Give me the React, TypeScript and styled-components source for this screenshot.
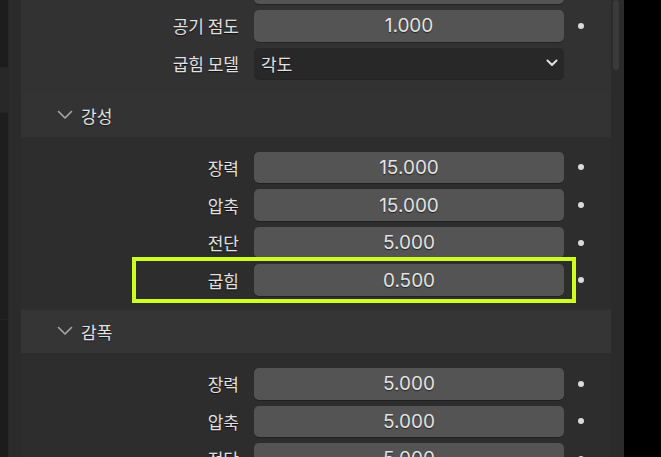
import React from "react";
import styled, { createGlobalStyle } from "styled-components";

const GlobalStyle = createGlobalStyle`
  html, body { margin: 0; padding: 0; background: #000; }
  body { font-family: Inter, "Noto Sans CJK KR", "Noto Sans", sans-serif; }
  * { box-sizing: border-box; }
`;

const Screen = styled.div`
  width: 661px;
  height: 457px;
  display: flex;
  overflow: hidden;
  background: #000;
`;

const SideStrip = styled.div`
  width: 9px;
  display: flex;
  flex-direction: column;
  border-right: 1px solid #262626;
`;

const StripSeg = styled.div<{ $h: number; $tone: string }>`
  height: ${(p) => p.$h}px;
  flex-shrink: 0;
  background: ${(p) => p.$tone};
  border-bottom: 1px solid #242424;
`;

const StripFill = styled.div`
  flex: 1;
  background: #1c1c1c;
`;

const Editor = styled.div`
  width: 615px;
  display: flex;
  align-items: flex-start;
  background: #2b2b2b;
  padding-left: 12px;
`;

const Content = styled.div`
  width: 590px;
  display: flex;
  flex-direction: column;
  & > * {
    flex-shrink: 0;
  }
`;

const ParentBody = styled.div`
  background: #323232;
  padding-bottom: 14.8px;
`;

const Rows = styled.div<{ $shift?: number }>`
  display: flex;
  flex-direction: column;
  gap: 6px;
  margin-top: ${(p) => p.$shift ?? 0}px;
  & > * {
    flex-shrink: 0;
  }
`;

const SubHeader = styled.div<{ $tone: string }>`
  height: 43px;
  display: flex;
  align-items: center;
  gap: 8px;
  padding-left: 36px;
  background: ${(p) => p.$tone};
  font-family: "Noto Sans CJK KR", sans-serif;
  font-size: 17px;
  color: #e2e2e2;
  text-shadow: 0 1px 1px rgba(0, 0, 0, 0.6);
`;

const SubBody = styled.div<{ $top: number; $bottom: number }>`
  background: #2d2d2d;
  padding: ${(p) => p.$top}px 0 ${(p) => p.$bottom}px;
`;

const Row = styled.div`
  position: relative;
  height: 31.6px;
  display: grid;
  grid-template-columns: 233px 310px 1fr;
  align-items: center;
`;

const Label = styled.div`
  padding-right: 15px;
  text-align: right;
  font-family: "Noto Sans CJK KR", sans-serif;
  font-size: 17px;
  color: #e2e2e2;
  white-space: nowrap;
  text-shadow: 0 1px 1px rgba(0, 0, 0, 0.7);
`;

const Field = styled.div<{ $variant?: "number" | "menu" }>`
  height: 100%;
  border-radius: 5px;
  display: flex;
  align-items: center;
  justify-content: ${(p) => (p.$variant === "menu" ? "space-between" : "center")};
  padding: ${(p) => (p.$variant === "menu" ? "0 6px 0 7px" : "0")};
  background: ${(p) => (p.$variant === "menu" ? "#282828" : "#545454")};
  box-shadow: 0 1px 0 rgba(0, 0, 0, 0.28);
  font-family: ${(p) =>
    p.$variant === "menu" ? `"Noto Sans CJK KR", sans-serif` : `Inter, "Noto Sans", sans-serif`};
  font-size: ${(p) => (p.$variant === "menu" ? "17px" : "19px")};
  color: #e3e3e3;
  text-shadow: 0 1px 1px rgba(0, 0, 0, 0.6);
`;

const Dot = styled.span`
  margin-left: 14px;
  width: 6px;
  height: 6px;
  border-radius: 50%;
  background: #dadada;
`;

const Highlight = styled.div`
  position: absolute;
  top: -7.5px;
  bottom: -7px;
  left: 111px;
  right: 35px;
  border: 4px solid #ccff1f;
  pointer-events: none;
`;

const ScrollTrack = styled.div`
  width: 12px;
  padding: 0 4px 0 2px;
`;

const ScrollThumb = styled.div`
  height: 70px;
  border-radius: 3px;
  background: #3a3a3a;
`;

const Outside = styled.div`
  flex: 1;
  background: #000;
`;

const Chevron = () => (
  <svg width="16" height="10" viewBox="0 0 16 10" fill="none">
    <path d="M1.5 1.5 L8 8 L14.5 1.5" stroke="#a8a8a8" strokeWidth="1.6" strokeLinecap="round" strokeLinejoin="round" />
  </svg>
);

const MenuArrow = () => (
  <svg width="12" height="8" viewBox="0 0 12 8" fill="none">
    <path d="M1.5 1.5 L6 6 L10.5 1.5" stroke="#e0e0e0" strokeWidth="2" strokeLinecap="round" strokeLinejoin="round" />
  </svg>
);

type Prop = { label: string; value: string; dot?: boolean; menu?: boolean; highlight?: boolean };

const PropRow = ({ label, value, dot = true, menu, highlight }: Prop) => (
  <Row>
    <Label>{label}</Label>
    <Field $variant={menu ? "menu" : "number"}>
      <span>{value}</span>
      {menu && <MenuArrow />}
    </Field>
    {dot ? <Dot /> : <span />}
    {highlight && <Highlight />}
  </Row>
);

const stiffness: Prop[] = [
  { label: "장력", value: "15.000" },
  { label: "압축", value: "15.000" },
  { label: "전단", value: "5.000" },
  { label: "굽힘", value: "0.500", highlight: true },
];

const damping: Prop[] = [
  { label: "장력", value: "5.000" },
  { label: "압축", value: "5.000" },
  { label: "전단", value: "5.000" },
];

export default function App() {
  return (
    <>
      <GlobalStyle />
      <Screen>
        <SideStrip>
          <StripSeg $h={68} $tone="#1d1d1d" />
          <StripSeg $h={45} $tone="#282828" />
          <StripSeg $h={207} $tone="#1e1e1e" />
          <StripFill />
        </SideStrip>
        <Editor>
          <Content>
            <ParentBody>
              <Rows $shift={-27.6}>
                <PropRow label="" value="" dot={false} />
                <PropRow label="공기 점도" value="1.000" />
                <PropRow label="굽힘 모델" value="각도" menu dot={false} />
              </Rows>
            </ParentBody>
            <SubHeader $tone="#333333">
              <Chevron />
              <span>강성</span>
            </SubHeader>
            <SubBody $top={14.7} $bottom={13.9}>
              <Rows>
                {stiffness.map((p) => (
                  <PropRow key={p.label} {...p} />
                ))}
              </Rows>
            </SubBody>
            <SubHeader $tone="#353535">
              <Chevron />
              <span>감폭</span>
            </SubHeader>
            <SubBody $top={15} $bottom={14}>
              <Rows>
                {damping.map((p) => (
                  <PropRow key={p.label} {...p} />
                ))}
              </Rows>
            </SubBody>
          </Content>
          <ScrollTrack>
            <ScrollThumb />
          </ScrollTrack>
        </Editor>
        <Outside />
      </Screen>
    </>
  );
}
